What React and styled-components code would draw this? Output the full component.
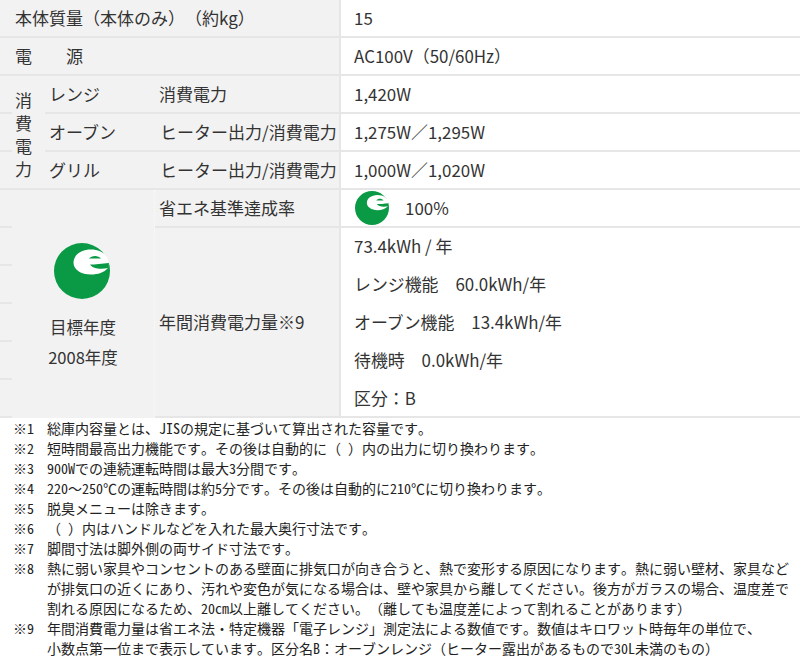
import React from "react";
import styled, { createGlobalStyle } from "styled-components";

const Global = createGlobalStyle`
  html, body { margin: 0; padding: 0; background: #fff; overflow: hidden; }
  body {
    font-family: "Noto Sans CJK JP", "Noto Sans", sans-serif;
    color: #333;
    text-spacing-trim: space-all;
  }
`;

const Sheet = styled.div`
  width: 800px;
  height: 660px;
  overflow: hidden;
`;

const SpecTable = styled.table`
  width: 800px;
  table-layout: fixed;
  border-collapse: separate;
  border-spacing: 0;
  font-size: 17px;
  line-height: 24px;
`;

const Label = styled.th`
  height: 36px;
  padding: 0 0 0 ${(p) => p.$pad ?? 0}px;
  box-sizing: content-box;
  background: #f2f2f2;
  border-bottom: 2px solid #e6e6e6;
  font-weight: 400;
  text-align: left;
  white-space: nowrap;
  vertical-align: middle;
`;

const Stub = styled.td`
  height: 36px;
  padding: 0;
  background: #f2f2f2;
  border-bottom: 2px solid #e6e6e6;
`;

const VerticalCell = styled.th`
  padding: 3px 10px 0 0;
  background: #f2f2f2;
  font-weight: 400;
  text-align: center;
  vertical-align: middle;
  border-bottom: 2px solid #e6e6e6;
  line-height: 23px;
`;

const MarkCell = styled.td`
  padding: 0;
  background: #f2f2f2;
  text-align: center;
  vertical-align: top;
  border-right: 1px dotted #fafafa;
`;

const MarkStack = styled.div`
  display: flex;
  flex-direction: column;
  align-items: center;
  padding-top: 53px;
  margin-left: -2px;
  line-height: 30px;
`;

const MarkCaption = styled.div`
  margin-top: 13px;
  padding-left: 2px;
  font-size: 16.5px;
`;

const Value = styled.td`
  height: 36px;
  padding: 0 0 0 13px;
  background: #fff;
  border-left: 2px solid #e6e6e6;
  border-bottom: 2px solid #e6e6e6;
  font-size: 16.9px;
  white-space: nowrap;
`;

const ValueLine = styled.div`
  height: 38px;
  line-height: 36px;

  &:last-child {
    height: 36px;
  }
`;

const MarkValue = styled.div`
  display: flex;
  align-items: center;
  gap: 16px;
  margin-left: 1px;
`;

const Notes = styled.div`
  display: grid;
  grid-template-columns: 34px 1fr;
  padding: 0 0 0 13px;
  font-family: "Noto Sans Mono CJK JP", "Noto Sans CJK JP", monospace;
  font-size: 14px;
  line-height: 20px;
  color: #222;
  white-space: pre;
`;

const Note = styled.div``;

function EcoMark({ size }) {
  return (
    <svg width={size} height={size} viewBox="0 0 56 56" style={{ display: "block" }}>
      <circle cx="28" cy="28" r="28" fill="#0a9a45" />
      <path
        d="M37 6.500C26.500 6.500 19.500 12.500 19.500 19.500C19.500 27 27 31.500 37 31.500C44 31.500 50 29.500 54 25L55 20C54.500 12 47 6.500 37 6.500Z"
        fill="#fff"
      />
      <path d="M35 15.500C37.500 12 44.500 12 47 15.500Z" fill="#0a9a45" />
      <path d="M36 21.500C41 21.500 48 20.800 55 20L54.500 25C47 26.500 39 26 36 21.500Z" fill="#0a9a45" />
    </svg>
  );
}

const notes = [
  ["※1", "総庫内容量とは、JISの規定に基づいて算出された容量です。"],
  ["※2", "短時間最高出力機能です。その後は自動的に（ ）内の出力に切り換わります。"],
  ["※3", "900Wでの連続運転時間は最大3分間です。"],
  ["※4", "220～250℃の運転時間は約5分です。その後は自動的に210℃に切り換わります。"],
  ["※5", "脱臭メニューは除きます。"],
  ["※6", "（ ）内はハンドルなどを入れた最大奥行寸法です。"],
  ["※7", "脚間寸法は脚外側の両サイド寸法です。"],
  ["※8", "熱に弱い家具やコンセントのある壁面に排気口が向き合うと、熱で変形する原因になります。熱に弱い壁材、家具など\nが排気口の近くにあり、汚れや変色が気になる場合は、壁や家具から離してください。後方がガラスの場合、温度差で\n割れる原因になるため、20cm以上離してください。（離しても温度差によって割れることがあります）"],
  ["※9", "年間消費電力量は省エネ法・特定機器「電子レンジ」測定法による数値です。数値はキロワット時毎年の単位で、\n小数点第一位まで表示しています。区分名B：オーブンレンジ（ヒーター露出があるもので30L未満のもの）"],
];

export default function App() {
  return (
    <Sheet>
      <Global />
      <SpecTable>
        <colgroup>
          <col style={{ width: 12 }} />
          <col style={{ width: 33 }} />
          <col style={{ width: 110 }} />
          <col style={{ width: 184 }} />
          <col />
        </colgroup>
        <tbody>
          <tr>
            <Label colSpan={4} $pad={15}>本体質量（本体のみ）（約kg）</Label>
            <Value>15</Value>
          </tr>
          <tr>
            <Label colSpan={4} $pad={15}>電　　源</Label>
            <Value>AC100V（50/60Hz）</Value>
          </tr>
          <tr>
            <Stub />
            <VerticalCell rowSpan={3}>消<br />費<br />電<br />力</VerticalCell>
            <Label $pad={4}>レンジ</Label>
            <Label $pad={4}>消費電力</Label>
            <Value>1,420W</Value>
          </tr>
          <tr>
            <Stub />
            <Label $pad={4}>オーブン</Label>
            <Label $pad={5}>ヒーター出力/消費電力</Label>
            <Value>1,275W／1,295W</Value>
          </tr>
          <tr>
            <Stub />
            <Label $pad={4}>グリル</Label>
            <Label $pad={5}>ヒーター出力/消費電力</Label>
            <Value>1,000W／1,020W</Value>
          </tr>
          <tr>
            <Stub />
            <MarkCell colSpan={2} rowSpan={6}>
              <MarkStack>
                <EcoMark size={56} />
                <MarkCaption>目標年度<br />2008年度</MarkCaption>
              </MarkStack>
            </MarkCell>
            <Label $pad={4}>省エネ基準達成率</Label>
            <Value>
              <MarkValue><EcoMark size={34} />100%</MarkValue>
            </Value>
          </tr>
          <tr>
            <Stub />
            <Label $pad={4} rowSpan={5}>年間消費電力量※9</Label>
            <Value rowSpan={5}>
              <ValueLine>73.4kWh / 年</ValueLine>
              <ValueLine>レンジ機能　60.0kWh/年</ValueLine>
              <ValueLine>オーブン機能　13.4kWh/年</ValueLine>
              <ValueLine>待機時　0.0kWh/年</ValueLine>
              <ValueLine>区分：B</ValueLine>
            </Value>
          </tr>
          <tr><Stub /></tr>
          <tr><Stub /></tr>
          <tr><Stub /></tr>
          <tr><Stub /></tr>
        </tbody>
      </SpecTable>
      <Notes>
        {notes.map(([mark, text]) => (
          <React.Fragment key={mark}>
            <Note>{mark}</Note>
            <Note>{text}</Note>
          </React.Fragment>
        ))}
      </Notes>
    </Sheet>
  );
}
